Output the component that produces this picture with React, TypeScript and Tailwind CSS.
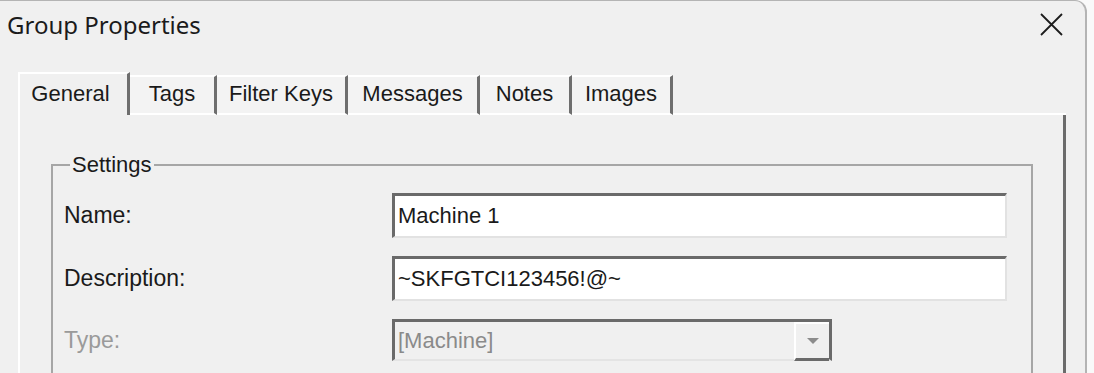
import React from "react";

const tabs = [
  { label: "General", w: 112 },
  { label: "Tags", w: 87 },
  { label: "Filter Keys", w: 131 },
  { label: "Messages", w: 132 },
  { label: "Notes", w: 92 },
  { label: "Images", w: 101 },
];

export default function App() {
  return (
    <div className="w-[1094px] h-[373px] overflow-hidden bg-[#f9f9f9] font-['Liberation_Sans',Arial,sans-serif]">
      <div className="w-[1087px] h-[400px] bg-[#f0f0f0] border-r-2 border-t border-[#b4b4b4] rounded-tr-[12px] flex flex-col">
        {/* Title bar */}
        <div className="h-[71px] flex items-start justify-between shrink-0">
          <div className="pl-[7px] pt-[12px] text-[24px] leading-[24px] text-[#1b1b1b] font-['Noto_Sans',sans-serif]">
            Group Properties
          </div>
          <div className="pt-[12px] pr-[22px]">
            <svg width="23" height="23" viewBox="0 0 23 23">
              <path d="M1 1 L22 22 M22 1 L1 22" stroke="#1c1c1c" strokeWidth="1.8" fill="none" />
            </svg>
          </div>
        </div>

        {/* Tabs + panel */}
        <div className="ml-[18px] w-[1048px] flex flex-col">
          <div className="flex items-end h-[43px]">
            {tabs.map((t, i) =>
              i === 0 ? (
                <div
                  key={t.label}
                  style={{ width: t.w }}
                  className="h-[43px] shrink-0 flex items-center justify-center pb-[3px] pr-[6px] border-t-2 border-l-2 border-white border-r-[3px] border-r-[#6e6e6e] text-[22px] text-[#1a1a1a]"
                >
                  {t.label}
                </div>
              ) : (
                <div
                  key={t.label}
                  style={{ width: t.w }}
                  className="h-[40px] shrink-0 flex items-center justify-center pb-[4px] border-t-2 border-b-2 border-white border-r-[3px] border-r-[#6e6e6e] bg-[#f3f3f3] text-[22px] text-[#1a1a1a]"
                >
                  {t.label}
                </div>
              )
            )}
            <div className="flex-1 h-[2px] bg-white" />
          </div>

          <div className="h-[300px] border-l-2 border-white border-r-[3px] border-r-[#6b6b6b] flex flex-col">
            <fieldset className="mt-[39px] ml-[31px] mr-[30px] border-2 border-[#a6a6a6] h-[260px]">
              <legend className="ml-[17px] px-[2px] text-[22px] leading-[22px] text-[#1a1a1a]">
                Settings
              </legend>
              <div className="pt-[17px] pl-[11px] pr-[24px] grid grid-cols-[328px_1fr] gap-y-[18px] text-[23px] text-[#1a1a1a]">
                <div className="h-[45px] flex items-center">Name:</div>
                <div className="h-[45px] bg-white border-t-[3px] border-l-[3px] border-[#6a6a6a] border-r-2 border-b-2 border-r-[#e2e2e2] border-b-[#e2e2e2] flex items-center pl-[3px] pb-[2px] text-[22px]">
                  Machine 1
                </div>

                <div className="h-[45px] flex items-center">Description:</div>
                <div className="h-[45px] bg-white border-t-[3px] border-l-[3px] border-[#6a6a6a] border-r-2 border-b-2 border-r-[#e2e2e2] border-b-[#e2e2e2] flex items-center pl-[3px] pb-[2px] text-[22px]">
                  ~SKFGTCI123456!@~
                </div>

                <div className="h-[42px] flex items-center text-[#9a9a9a]">Type:</div>
                <div className="w-[440px] h-[42px] bg-[#f0f0f0] border-t-[3px] border-l-[3px] border-r-[3px] border-[#6a6a6a] border-b-2 border-b-[#e4e4e4] flex items-stretch">
                  <div className="flex-1 flex items-center pl-[3px] text-[22px] text-[#8a8a8a]">[Machine]</div>
                  <div className="w-[35px] border-l-2 border-t-2 border-white border-b-[3px] border-b-[#6a6a6a] -mb-[2px] flex items-center justify-center">
                    <svg width="12" height="7" viewBox="0 0 12 7">
                      <path d="M0 0 L12 0 L6 6 Z" fill="#8c8c8c" />
                    </svg>
                  </div>
                </div>
              </div>
            </fieldset>
          </div>
        </div>
      </div>
    </div>
  );
}
